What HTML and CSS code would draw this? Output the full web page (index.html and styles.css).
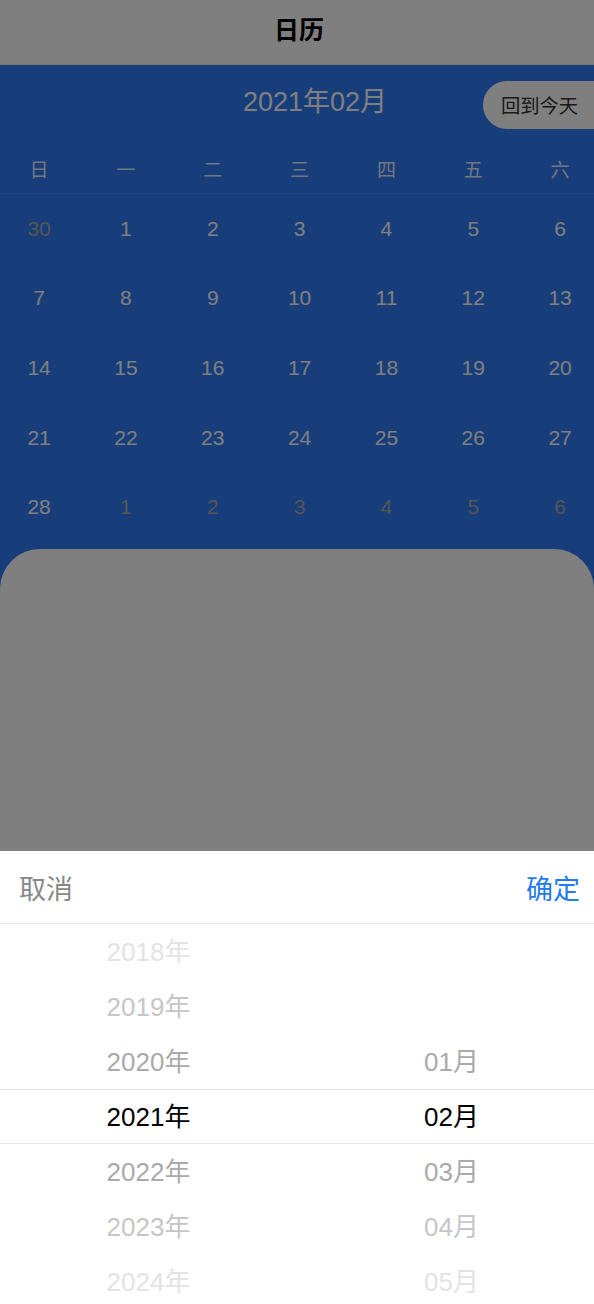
FILE: index.html
```html
<!DOCTYPE html>
<html lang="zh">
<head>
<meta charset="utf-8">
<title>日历</title>
<link rel="stylesheet" href="styles.css">
</head>
<body>
<div class="page">
  <header class="nav"><h1 class="nav-title">日历</h1></header>
  <section class="cal">
    <div class="cal-head">
      <h2 class="cal-month">2021年02月</h2>
      <button class="today-btn">回到今天</button>
    </div>
    <div class="weekdays">
      <span>日</span><span>一</span><span>二</span><span>三</span><span>四</span><span>五</span><span>六</span>
    </div>
    <div class="days">
      <span class="dim">30</span><span>1</span><span>2</span><span>3</span><span>4</span><span>5</span><span>6</span>
      <span>7</span><span>8</span><span>9</span><span>10</span><span>11</span><span>12</span><span>13</span>
      <span>14</span><span>15</span><span>16</span><span>17</span><span>18</span><span>19</span><span>20</span>
      <span>21</span><span>22</span><span>23</span><span>24</span><span>25</span><span>26</span><span>27</span>
      <span>28</span><span class="dim">1</span><span class="dim">2</span><span class="dim">3</span><span class="dim">4</span><span class="dim">5</span><span class="dim">6</span>
    </div>
  </section>
  <main class="content"></main>
</div>
<div class="mask"></div>
<div class="sheet">
  <div class="sheet-head">
    <span class="btn-cancel">取消</span>
    <span class="btn-ok">确定</span>
  </div>
  <div class="picker">
    <div class="indicator"></div>
    <div class="col col-year">
      <div class="item d3">2018年</div>
      <div class="item d2">2019年</div>
      <div class="item d1">2020年</div>
      <div class="item sel">2021年</div>
      <div class="item d1">2022年</div>
      <div class="item d2">2023年</div>
      <div class="item d3">2024年</div>
      <div class="item d3">2025年</div>
    </div>
    <div class="col col-month">
      <div class="item"></div>
      <div class="item"></div>
      <div class="item d1">01月</div>
      <div class="item sel">02月</div>
      <div class="item d1">03月</div>
      <div class="item d2">04月</div>
      <div class="item d3">05月</div>
      <div class="item d3">06月</div>
    </div>
  </div>
</div>
</body>
</html>
```

FILE: styles.css
```css
* { box-sizing: border-box; }
html, body {
  margin: 0;
  padding: 0;
  height: 100%;
  overflow: hidden;
}
body {
  font-family: "Liberation Sans", "Noto Sans CJK SC", sans-serif;
  background: #fff;
}
.page { width: 594px; }

.nav {
  height: 65px;
  background: #fff;
  border-bottom: 1px solid #eeeeee;
  display: flex;
  justify-content: center;
  padding-left: 4px;
}
.nav-title {
  margin: 0;
  font-size: 25px;
  line-height: 60px;
  font-weight: bold;
  color: #000;
}

.cal {
  background: #2e7cf6;
  padding-bottom: 47px;
  overflow: hidden;
}
.cal-head {
  position: relative;
  height: 80px;
  display: flex;
  align-items: center;
  justify-content: center;
  padding-left: 36px;
}
.cal-month {
  margin: 0;
  font-size: 27px;
  font-weight: normal;
  color: #fff;
  line-height: 1;
  margin-top: -6px;
}
.today-btn {
  position: absolute;
  right: 0;
  top: 16px;
  height: 48px;
  width: 111px;
  border: 0;
  border-radius: 24px 0 0 24px;
  background: #fff;
  color: #333;
  font-family: inherit;
  font-size: 19.3px;
  white-space: nowrap;
  padding: 0 0 0 18px;
  text-align: left;
}

.weekdays, .days {
  display: grid;
  grid-template-columns: repeat(7, 86.83px);
  width: 608px;
  margin-left: -4.3px;
}
.weekdays {
  height: 49px;
  border-bottom: 1px solid rgba(255, 255, 255, 0.08);
  align-items: center;
  color: rgba(255, 255, 255, 0.88);
  font-size: 19px;
  text-align: center;
}
.weekdays span { margin-top: -2px; }
.days {
  grid-auto-rows: 69.6px;
  align-items: center;
  text-align: center;
  color: #fff;
  font-size: 21px;
}
.days .dim { color: #aaaaaa; }

.content {
  background: #fff;
  border-radius: 40px 40px 0 0;
  margin-top: -40px;
  height: 760px;
}

.mask {
  position: fixed;
  inset: 0;
  background: rgba(0, 0, 0, 0.5);
  z-index: 1;
}

.sheet {
  position: fixed;
  left: 0;
  right: 0;
  bottom: 0;
  height: 453px;
  background: #fff;
  z-index: 2;
  overflow: hidden;
}
.sheet-head {
  height: 73px;
  border-bottom: 1px solid #e8e8e8;
  display: flex;
  align-items: center;
  justify-content: space-between;
  padding: 0 14px 0 19px;
  font-size: 27px;
}
.btn-cancel { color: #888888; }
.btn-ok { color: #1f7cf0; }

.picker {
  position: relative;
  display: grid;
  grid-template-columns: 1fr 1fr;
}
.indicator {
  position: absolute;
  left: 0;
  right: 0;
  top: 165px;
  height: 55px;
  border-top: 1px solid #e6e6e6;
  border-bottom: 1px solid #e6e6e6;
  pointer-events: none;
}
.col {
  display: flex;
  flex-direction: column;
  padding-top: 1px;
}
.col-month { padding-left: 12px; }
.item {
  height: 55px;
  line-height: 55px;
  text-align: center;
  font-size: 26px;
  color: #000;
}
.item.d1 { color: #aaaaaa; }
.item.d2 { color: #c6c6c6; }
.item.d3 { color: #e3e3e3; }
.item.sel { color: #000; }
```
